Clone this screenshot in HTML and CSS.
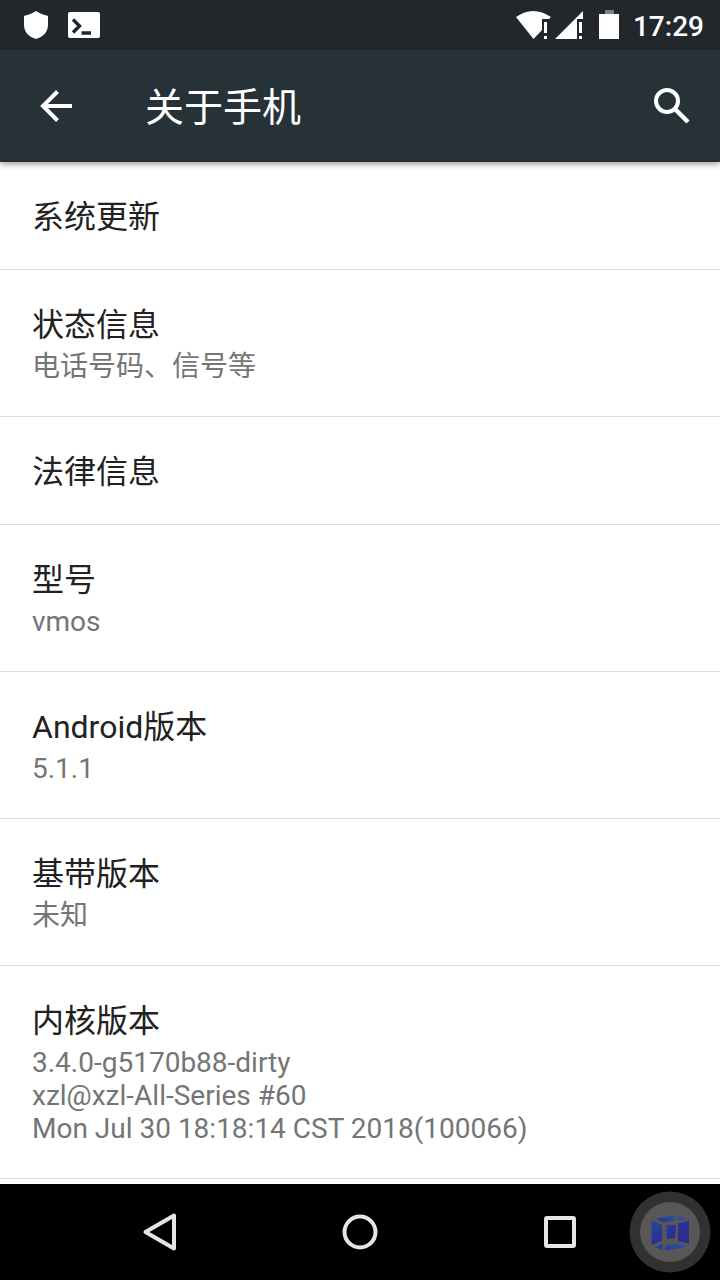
FILE: index.html
```html
<!DOCTYPE html>
<html lang="zh-CN">
<head>
<meta charset="utf-8">
<meta name="viewport" content="width=device-width, initial-scale=1">
<title>关于手机</title>
<link rel="stylesheet" href="styles.css">
</head>
<body class="phone">
<div class="status-bar">
  <div class="status-group notices">
    <svg width="24" height="30" viewBox="0 0 24 30" fill="#fff" aria-hidden="true"><path d="M12 1C9 3 4 5 0 6v9c0 7 5 12 12 14 7-2 12-7 12-14V6C20 5 15 3 12 1z"/></svg>
    <svg width="32" height="26" viewBox="0 0 32 26" aria-hidden="true"><rect width="32" height="26" rx="2" fill="#fff"/><path d="M5 7.500l6.500 6.500L5 20.500M13.500 21h9.500" fill="none" stroke="#21272b" stroke-width="3.400"/></svg>
  </div>
  <div class="status-group">
    <svg width="106" height="30" viewBox="0 0 106 30" fill="#fff" aria-hidden="true">
      <path d="M1 7Q18-5 36 7L34 9H27V20L18.500 29z"/>
      <path d="M29 12h3v11h-3zM29 26h3v3h-3z"/>
      <path d="M40 29L68 1V9H62V29z"/>
      <path d="M64 12h3v11h-3zM64 26h3v3h-3z"/>
      <path d="M90 0h9v4h-9z" fill="#7b7f81"/>
      <path d="M84 4h20v25H84z"/>
    </svg>
    <time class="clock">17:29</time>
  </div>
</div>
<header class="app-bar">
  <button class="icon-button" type="button" aria-label="返回">
    <svg width="32" height="32" viewBox="0 0 32 32" fill="none" stroke="#fff" stroke-width="4" aria-hidden="true"><path d="M32 16H3M17.500 1.500L3 16l14.500 14.500"/></svg>
  </button>
  <h1 class="app-title">关于手机</h1>
  <button class="icon-button" type="button" aria-label="搜索">
    <svg width="36" height="36" viewBox="0 0 36 36" fill="none" stroke="#fff" stroke-width="4" aria-hidden="true"><circle cx="13" cy="13" r="11"/><path d="M21 21l13 13" stroke-width="4.500"/></svg>
  </button>
</header>
<main class="content">
  <ul class="settings">
    <li><a class="row" href="#update"><span class="name">系统更新</span></a></li>
    <li><a class="row" href="#status"><span class="name">状态信息</span><span class="summary">电话号码、信号等</span></a></li>
    <li><a class="row" href="#legal"><span class="name">法律信息</span></a></li>
    <li><a class="row" href="#model"><span class="name">型号</span><span class="summary">vmos</span></a></li>
    <li><a class="row" href="#android"><span class="name">Android版本</span><span class="summary">5.1.1</span></a></li>
    <li><a class="row" href="#baseband"><span class="name">基带版本</span><span class="summary">未知</span></a></li>
    <li><a class="row" href="#kernel"><span class="name">内核版本</span><span class="summary">3.4.0-g5170b88-dirty<br>xzl@xzl-All-Series #60<br>Mon Jul 30 18:18:14 CST 2018(100066)</span></a></li>
  </ul>
</main>
<nav class="nav-bar" aria-label="导航">
  <button class="nav-button" type="button" aria-label="后退">
    <svg width="40" height="40" viewBox="0 0 40 40" aria-hidden="true"><path d="M34 3.500v33L5.500 20z"/></svg>
  </button>
  <button class="nav-button" type="button" aria-label="主页">
    <svg width="40" height="40" viewBox="0 0 40 40" aria-hidden="true"><circle cx="20" cy="20" r="15.500"/></svg>
  </button>
  <button class="nav-button" type="button" aria-label="最近任务">
    <svg width="40" height="40" viewBox="0 0 40 40" aria-hidden="true"><rect x="6" y="6" width="28" height="28" rx="1"/></svg>
  </button>
</nav>
<button class="float-ball" type="button" aria-label="悬浮球">
  <svg width="82" height="82" viewBox="0 0 82 82" aria-hidden="true">
    <defs>
      <linearGradient id="face" x1="0" y1="0" x2="1" y2="1"><stop offset="0" stop-color="#2a4a8a"/><stop offset=".4" stop-color="#2a329c"/><stop offset="1" stop-color="#2c2a88"/></linearGradient>
      <linearGradient id="edge" x1="0" y1="1" x2="1" y2="0"><stop offset="0" stop-color="#2a2f98"/><stop offset="1" stop-color="#2c5f94"/></linearGradient>
    </defs>
    <circle cx="41" cy="41" r="40.500" fill="#313131"/>
    <circle cx="41" cy="41" r="30" fill="#575757"/>
    <path d="M22.500 29L33 34V50L22.500 54zM49 32.500L60 29.500V52.500L49 50z" fill="url(#face)"/>
    <path d="M26 27.500L46.500 24L44.500 30L34 31.500zM48.500 24.500L57 27.500L48.500 30z" fill="url(#edge)"/>
    <path d="M37.500 53.500L49 52L58.500 56L36 59.500zM26 56L34 52.500L33.500 59z" fill="url(#edge)"/>
    <path d="M37 34h10l-1 13-8 1z" fill="url(#face)"/>
  </svg>
</button>
</body>
</html>
```
FILE: styles.css
```css
* {
  box-sizing: border-box;
}

.phone {
  display: flex;
  flex-direction: column;
  height: 100vh;
  margin: 0;
  overflow: hidden;
  background: #fff;
  font-family: Roboto, "Noto Sans CJK SC", sans-serif;
}

svg {
  display: block;
}

button {
  padding: 0;
  border: 0;
  background: none;
}

.status-bar {
  display: flex;
  flex: none;
  align-items: center;
  justify-content: space-between;
  height: 50px;
  padding: 0 16px 0 24px;
  background: #21272b;
  color: #fff;
}

.status-group {
  display: flex;
  align-items: center;
  gap: 12px;
}

.notices {
  gap: 20px;
}

.clock {
  padding-top: 3px;
  font-size: 28px;
  font-weight: 500;
  line-height: 32px;
}

.app-bar {
  display: flex;
  flex: none;
  align-items: center;
  height: 112px;
  padding: 0 8px 0 16px;
  background: #263238;
  color: #fff;
  box-shadow: 0 2px 6px rgba(0, 0, 0, 0.4);
  z-index: 1;
}

.icon-button {
  display: grid;
  place-items: center;
  width: 80px;
  height: 80px;
}

.app-title {
  flex: 1;
  margin: 0;
  padding: 4px 0 0 49px;
  font-size: 39px;
  font-weight: 400;
  line-height: 56px;
}

.content {
  flex: 1;
  min-height: 0;
  overflow: hidden;
}

.settings {
  margin: 0;
  padding: 0;
  list-style: none;
}

.row {
  display: block;
  padding: 33px 32px 30px;
  border-bottom: 1px solid #dcdcdc;
  color: #212121;
  text-decoration: none;
}

.name {
  display: block;
  font-size: 32px;
  line-height: 44px;
}

.summary {
  display: block;
  padding: 3px 0;
  color: #757575;
  font-size: 28px;
  line-height: 33px;
}

.nav-bar {
  display: flex;
  flex: none;
  align-items: center;
  justify-content: center;
  height: 96px;
  background: #000;
}

.nav-button {
  display: grid;
  place-items: center;
  width: 200px;
  height: 96px;
  fill: none;
  stroke: #e6e6e6;
  stroke-width: 4;
  stroke-linejoin: round;
}

.float-ball {
  position: absolute;
  right: 9px;
  bottom: 7px;
  border-radius: 50%;
}
```
